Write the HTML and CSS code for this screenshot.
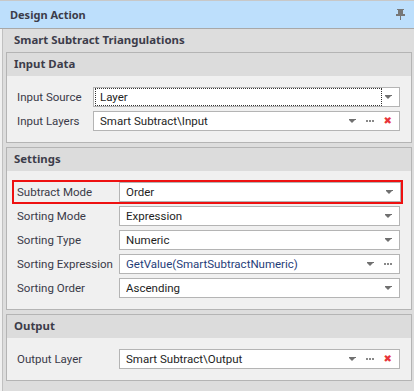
FILE: index.html
```html
<!DOCTYPE html>
<html lang="en">

<head>
  <meta charset="UTF-8">
  <meta name="viewport" content="width=device-width, initial-scale=1.0">
  <title>Design Action</title>
  <link rel="stylesheet" href="styles.css">
</head>

<body>

  <div class="panel">
    <div class="caption">
      <span>Design Action</span>
      <svg class="pin" width="9" height="11" viewBox="0 0 9 11">
        <rect x="1" y="0" width="7" height="1" fill="#777" />
        <rect x="2" y="1" width="5" height="4" fill="#777" />
        <rect x="0" y="5" width="9" height="2" fill="#777" />
        <rect x="4" y="7" width="1" height="4" fill="#777" />
      </svg>
    </div>

    <div class="body">
      <div class="sub-title">Smart Subtract Triangulations</div>

      <div class="group">
        <div class="group-head">Input Data</div>
        <div class="group-body">
          <div class="row">
            <span class="label">Input Source</span>
            <div class="field narrow">
              <span class="value focus">Layer</span>
              <i class="arrow"></i>
            </div>
          </div>
          <div class="row">
            <span class="label">Input Layers</span>
            <div class="field narrow">
              <span class="value">Smart Subtract\Input</span>
              <i class="arrow"></i>
              <i class="dots"></i>
              <i class="clear">&#10006;</i>
            </div>
          </div>
        </div>
      </div>

      <div class="group">
        <div class="group-head">Settings</div>
        <div class="group-body">
          <div class="row marked">
            <span class="label">Subtract Mode</span>
            <div class="field">
              <span class="value">Order</span>
              <i class="arrow"></i>
            </div>
          </div>
          <div class="row">
            <span class="label">Sorting Mode</span>
            <div class="field">
              <span class="value">Expression</span>
              <i class="arrow"></i>
            </div>
          </div>
          <div class="row">
            <span class="label">Sorting Type</span>
            <div class="field">
              <span class="value">Numeric</span>
              <i class="arrow"></i>
            </div>
          </div>
          <div class="row">
            <span class="label">Sorting Expression</span>
            <div class="field">
              <span class="value expr">GetValue(SmartSubtractNumeric)</span>
              <i class="arrow"></i>
              <i class="dots"></i>
            </div>
          </div>
          <div class="row">
            <span class="label">Sorting Order</span>
            <div class="field">
              <span class="value">Ascending</span>
              <i class="arrow"></i>
            </div>
          </div>
        </div>
      </div>

      <div class="group">
        <div class="group-head">Output</div>
        <div class="group-body">
          <div class="row">
            <span class="label">Output Layer</span>
            <div class="field">
              <span class="value">Smart Subtract\Output</span>
              <i class="arrow"></i>
              <i class="dots"></i>
              <i class="clear">&#10006;</i>
            </div>
          </div>
        </div>
      </div>
    </div>
  </div>

</body>

</html>
```

FILE: styles.css
```css
* {
  margin: 0;
  padding: 0;
  box-sizing: border-box;
}

html,
body {
  width: 100%;
  height: 100%;
}

body {
  font-family: Roboto, "Noto Sans", sans-serif;
  font-size: 11.5px;
  color: #3a3a48;
  background: #f0f0f0;
  overflow: hidden;
}

.panel {
  width: 414px;
  height: 391px;
  border-top: 1px solid #c8c8c8;
  display: flex;
  flex-direction: column;
}

.caption {
  height: 28px;
  background: #bddffc;
  border-bottom: 1px solid #a8a8a8;
  display: flex;
  align-items: center;
  justify-content: space-between;
  padding: 0 9px 0 10px;
  font-family: "Noto Sans", sans-serif;
  font-size: 11px;
  font-weight: bold;
  color: #3c3c4a;
}

.pin {
  display: block;
}

.body {
  flex: 1;
  margin-left: 2px;
  border-left: 1px solid #c0c0c0;
  background: #dddddd;
  display: flex;
  flex-direction: column;
}

.sub-title {
  height: 23px;
  line-height: 22px;
  padding-left: 11px;
  font-family: "Noto Sans", sans-serif;
  font-size: 11.4px;
  font-weight: bold;
  color: #3c3c4a;
}

.group {
  margin: 0 2px 4px 3px;
  border: 1px solid #b4b4b4;
  background: #f0f0f0;
}

.group:last-child {
  margin-bottom: 0;
}

.group-head {
  height: 23px;
  line-height: 22px;
  background: #dcdcdc;
  padding-left: 7px;
  font-family: "Noto Sans", sans-serif;
  font-size: 11.4px;
  font-weight: bold;
  color: #3c3c4a;
}

.group-body {
  padding: 11px 11px 11px 7px;
  display: flex;
  flex-direction: column;
  gap: 4px;
}

.row {
  display: flex;
  align-items: center;
  height: 20px;
}

.label {
  width: 105px;
  padding-left: 3px;
  white-space: nowrap;
}

.narrow {
  margin-left: -26px;
}

.field {
  flex: 1;
  height: 20px;
  background: #fff;
  border: 1px solid #b4b4b4;
  display: flex;
  align-items: center;
  padding: 0 7px 0 6px;
  color: #1e1e1e;
}

.value {
  flex: 1;
  white-space: nowrap;
  overflow: hidden;
  line-height: 16px;
}

.focus {
  outline: 1px dotted #333;
  margin: 0 4px 0 -4px;
  padding-left: 4px;
}

.expr {
  color: #1f3d78;
}

.arrow {
  width: 7px;
  height: 4px;
  position: relative;
  border-top: 1px solid #707070;
}

.arrow::after {
  content: "";
  position: absolute;
  left: 0;
  top: 0;
  border-left: 3.5px solid transparent;
  border-right: 3.5px solid transparent;
  border-top: 3px solid #707070;
}

.dots {
  width: 8px;
  height: 2px;
  margin-left: 10px;
  background: linear-gradient(90deg, #888 2px, transparent 2px 3px, #888 3px 5px, transparent 5px 6px, #888 6px);
}

.clear {
  font-style: normal;
  color: #e8333a;
  font-size: 10px;
  line-height: 10px;
  margin-left: 10px;
  font-family: "DejaVu Sans", sans-serif;
}

.marked {
  outline: 2px solid #ee1111;
  margin-right: -1px;
}
```
